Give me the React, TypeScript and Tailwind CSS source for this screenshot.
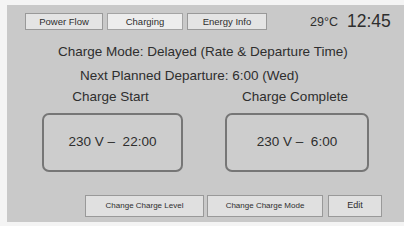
import React from "react";

const font = { fontFamily: '"Liberation Sans", Arial, sans-serif' };

export default function App() {
  return (
    <div
      className="w-[404px] h-[226px] bg-[#f4f4f4] pl-[7px] pt-[5px] pb-[4px] overflow-hidden"
      style={font}
    >
      <div className="w-full h-full bg-[#c9c9c9] text-[#2e2e2e] flex flex-col relative">
        {/* top bar */}
        <div className="flex items-center pl-[18px] pt-[8px] h-[25px]">
          <div className="flex gap-[4px]">
            <div className="w-[78px] h-[17px] bg-[#e4e4e4] border border-[#999999] flex items-center justify-center text-[9.5px] leading-none">
              Power Flow
            </div>
            <div className="w-[76px] h-[17px] bg-[#ededed] border border-[#a4a4a4] flex items-center justify-center text-[9.5px] leading-none">
              Charging
            </div>
            <div className="w-[80px] h-[17px] bg-[#e4e4e4] border border-[#999999] flex items-center justify-center text-[9.5px] leading-none">
              Energy Info
            </div>
          </div>
          <div className="ml-[43px] text-[12.5px] leading-none mt-[2px]">29°C</div>
          <div className="ml-[9px] text-[17.5px] leading-none">12:45</div>
        </div>
        {/* info lines */}
        <div className="pl-[51px] mt-[15px] text-[13.5px] leading-none">
          Charge Mode: Delayed (Rate &amp; Departure Time)
        </div>
        <div className="pl-[73px] mt-[10px] text-[13.5px] leading-none">
          Next Planned Departure: 6:00 (Wed)
        </div>
        {/* columns */}
        <div className="flex mt-[8px] pl-[35px]">
          <div className="w-[141px] flex flex-col items-center">
            <div className="text-[13.5px] leading-none pr-[4px]">Charge Start</div>
            <div className="mt-[9px] w-[141px] h-[59px] border-2 border-[#767676] rounded-[7px] bg-[#cdcdcd] flex items-center justify-center text-[13.5px] leading-none">
              230 V –&nbsp; 22:00
            </div>
          </div>
          <div className="ml-[42px] w-[144px] flex flex-col items-center">
            <div className="text-[13.5px] leading-none pr-[4px]">Charge Complete</div>
            <div className="mt-[9px] w-[144px] h-[59px] border-2 border-[#767676] rounded-[7px] bg-[#cdcdcd] flex items-center justify-center text-[13.5px] leading-none">
              230 V –&nbsp; 6:00
            </div>
          </div>
        </div>
        {/* bottom buttons */}
        <div className="flex mt-[23px] pl-[78px] gap-[3px]">
          <div className="w-[119px] h-[22px] bg-[#e0e0e0] border border-[#999999] flex items-center justify-center text-[8px] leading-none">
            Change Charge Level
          </div>
          <div className="w-[116px] h-[22px] bg-[#e0e0e0] border border-[#999999] flex items-center justify-center text-[8px] leading-none">
            Change Charge Mode
          </div>
          <div className="ml-[2px] w-[54px] h-[22px] bg-[#e0e0e0] border border-[#999999] flex items-center justify-center text-[9px] leading-none">
            Edit
          </div>
        </div>
      </div>
    </div>
  );
}
